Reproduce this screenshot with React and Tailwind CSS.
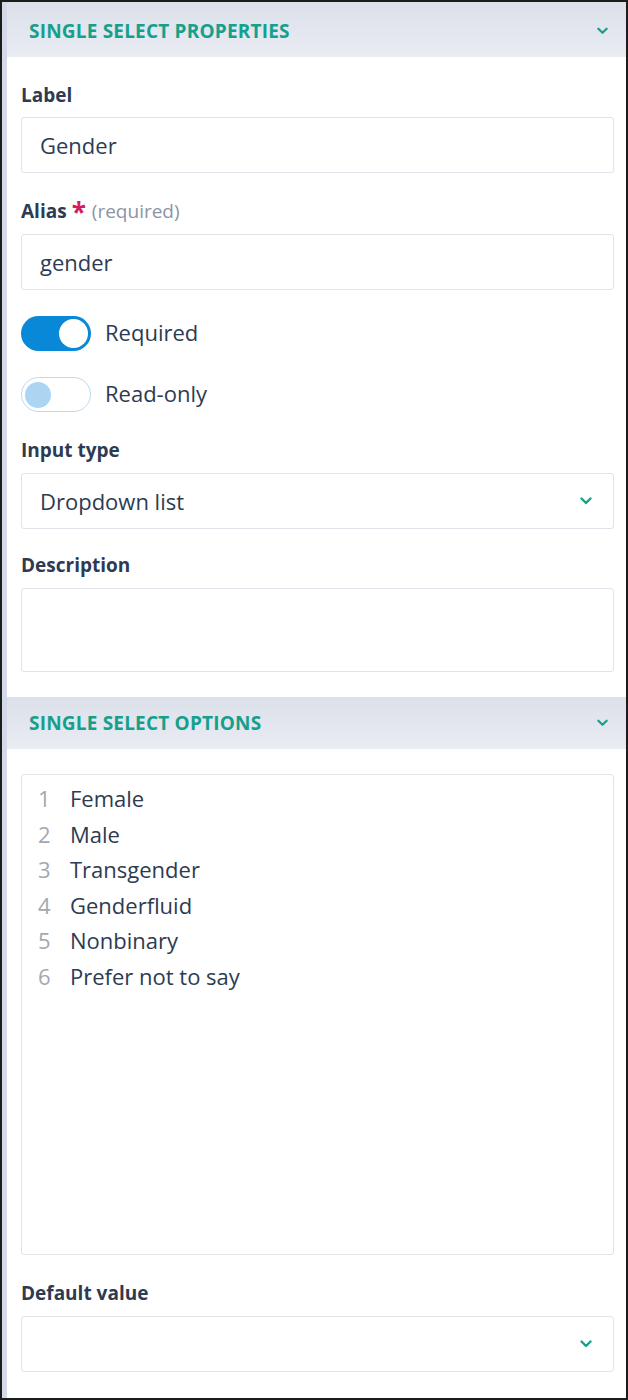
import React from 'react';

const Chevron = ({ className = '' }) => (
  <svg width="12" height="8" viewBox="0 0 12 8" className={className}>
    <path d="M1.5 1.5 L6 6 L10.5 1.5" fill="none" stroke="currentColor" strokeWidth="2.4" strokeLinecap="round" strokeLinejoin="round" />
  </svg>
);

const SectionHeader = ({ title, tall }) => (
  <div className={`${tall ? 'h-[55px] pt-[3px]' : 'h-[52px]'} flex items-center justify-between pl-[22px] pr-[18px] bg-gradient-to-b from-[#dce0e9] to-[#e9ecf3]`}>
    <span className="text-[19px] font-bold tracking-[0.2px] text-[#16a08b] uppercase">{title}</span>
    <Chevron className="text-[#16a08b] w-[11px] h-[8px]" />
  </div>
);

const FieldLabel = ({ children }) => (
  <div className="text-[19px] leading-[26px] font-bold text-[#2d3b52]">{children}</div>
);

const TextInput = ({ value }) => (
  <div className="h-[56px] border border-[#e0e3e9] rounded-[3px] bg-white flex items-center px-[18px] text-[22px] text-[#2d3b52]">
    {value}
  </div>
);

const Select = ({ value }) => (
  <div className="h-[56px] border border-[#e0e3e9] rounded-[3px] bg-white flex items-center justify-between pl-[18px] pr-[21px] text-[22px] text-[#2d3b52]">
    <span>{value}</span>
    <Chevron className="text-[#16a08b] w-[12px] h-[8px]" />
  </div>
);

const Toggle = ({ on, label }) => (
  <div className="flex items-center gap-[14px]">
    {on ? (
      <div className="w-[70px] h-[35px] rounded-full bg-[#0a88d8] flex items-center justify-end pr-[3px]">
        <div className="w-[29px] h-[29px] rounded-full bg-white" />
      </div>
    ) : (
      <div className="w-[70px] h-[35px] rounded-full bg-white border border-[#b9dcf4] flex items-center pl-[3px]">
        <div className="w-[26px] h-[26px] rounded-full bg-[#acd4f3]" />
      </div>
    )}
    <span className="text-[22px] leading-[30px] -mt-[3px] text-[#2d3b52]">{label}</span>
  </div>
);

const options = ['Female', 'Male', 'Transgender', 'Genderfluid', 'Nonbinary', 'Prefer not to say'];

export default function App() {
  return (
    <div className="w-[628px] h-[1400px] bg-white border-2 border-[#1c1c1c] flex" style={{ fontFamily: '"Open Sans", sans-serif' }}>
      <div className="w-[5px] bg-[#d3d9e6]" />
      <div className="flex-1 flex flex-col">
        <SectionHeader title="Single select properties" tall />

        <div className="pl-[14px] pr-[12px] pt-[25px] pb-[25px] flex flex-col">
          <FieldLabel>Label</FieldLabel>
          <div className="mt-[9px]">
            <TextInput value="Gender" />
          </div>

          <div className="mt-[25px] flex items-end gap-[6px]">
            <FieldLabel>Alias</FieldLabel>
            <span className="text-[26px] leading-[26px] font-bold text-[#d71a5c] -ml-[1px] -mb-[1px]">*</span>
            <span className="text-[19px] leading-[26px] text-[#8b95a4]">(required)</span>
          </div>
          <div className="mt-[10px]">
            <TextInput value="gender" />
          </div>

          <div className="mt-[26px]">
            <Toggle on label="Required" />
          </div>
          <div className="mt-[26px]">
            <Toggle label="Read-only" />
          </div>

          <div className="mt-[25px]">
            <FieldLabel>Input type</FieldLabel>
          </div>
          <div className="mt-[10px]">
            <Select value="Dropdown list" />
          </div>

          <div className="mt-[23px]">
            <FieldLabel>Description</FieldLabel>
          </div>
          <div className="mt-[10px] h-[84px] border border-[#e0e3e9] rounded-[3px] bg-white" />
        </div>

        <SectionHeader title="Single select options" />

        <div className="pl-[14px] pr-[12px] pt-[25px] flex flex-col">
          <div className="h-[481px] border border-[#e0e3e9] rounded-[3px] bg-white pt-[6px] pl-[16px]">
            {options.map((opt, i) => (
              <div key={opt} className="flex items-center h-[35.5px] text-[22px]">
                <span className="w-[32px] text-[#a3a8b0]">{i + 1}</span>
                <span className="text-[#2d3b52]">{opt}</span>
              </div>
            ))}
          </div>

          <div className="mt-[25px]">
            <FieldLabel>Default value</FieldLabel>
          </div>
          <div className="mt-[10px]">
            <Select value="" />
          </div>
        </div>
      </div>
    </div>
  );
}
